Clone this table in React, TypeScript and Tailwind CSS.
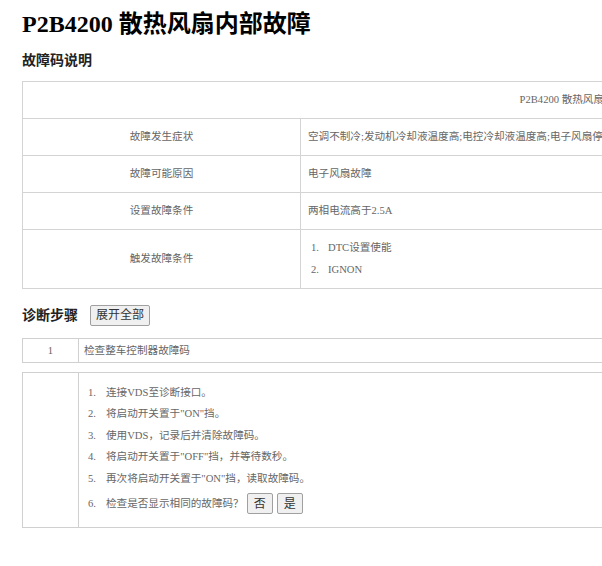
const FONT = "font-['Liberation_Serif','Noto_Sans_CJK_SC',serif]";

const infoRows: { label: string; value: string }[] = [
  { label: "故障发生症状", value: "空调不制冷;发动机冷却液温度高;电控冷却液温度高;电子风扇停止工作" },
  { label: "故障可能原因", value: "电子风扇故障" },
  { label: "设置故障条件", value: "两相电流高于2.5A" },
];

const triggers = ["DTC设置使能", "IGNON"];

const steps = [
  "连接VDS至诊断接口。",
  "将启动开关置于\"ON\"挡。",
  "使用VDS，记录后并清除故障码。",
  "将启动开关置于\"OFF\"挡，并等待数秒。",
  "再次将启动开关置于\"ON\"挡，读取故障码。",
];

function SmallButton({ children, className = "" }: { children: React.ReactNode; className?: string }) {
  return (
    <button
      className={`h-[21px] rounded-[2px] border border-[#a0a0a0] bg-[#f0f0f0] text-[12px] leading-none text-[#333] ${className}`}
    >
      {children}
    </button>
  );
}

export default function App() {
  return (
    <div className={`w-full h-screen overflow-hidden bg-white pl-[22px] pt-[8px] ${FONT}`}>
      <h1 className="text-[24px] leading-[32px] font-bold text-black whitespace-nowrap">
        P2B4200 散热风扇内部故障
      </h1>
      <h2 className="mt-[11px] text-[14px] leading-[20px] font-bold text-[#222]">故障码说明</h2>

      <table className="mt-[10px] w-[1122px] border-collapse text-[10.6px] text-[#666]">
        <tbody>
          <tr>
            <td colSpan={2} className="h-[37px] border border-[#d4d4d4] text-center">
              P2B4200 散热风扇内部故障
            </td>
          </tr>
          {infoRows.map((r) => (
            <tr key={r.label}>
              <td className="w-[278px] h-[37px] border border-[#d4d4d4] text-center">{r.label}</td>
              <td className="h-[37px] border border-[#d4d4d4] pl-[7px] whitespace-nowrap">{r.value}</td>
            </tr>
          ))}
          <tr>
            <td className="w-[278px] border border-[#d4d4d4] text-center">触发故障条件</td>
            <td className="border border-[#d4d4d4] pl-[10px] py-[7px]">
              {triggers.map((t, i) => (
                <div key={t} className="flex h-[22px] items-center">
                  <span className="w-[17px]">{i + 1}.</span>
                  <span>{t}</span>
                </div>
              ))}
            </td>
          </tr>
        </tbody>
      </table>

      <div className="mt-[15px] flex h-[22px] items-center gap-[12px]">
        <span className="text-[14px] font-bold text-[#222]">诊断步骤</span>
        <SmallButton className="w-[60px]">展开全部</SmallButton>
      </div>

      <div className="mt-[12px] flex h-[25px] w-[1122px] border border-[#d0d0d0] text-[10.6px] text-[#666]">
        <div className="flex w-[56px] items-center justify-center border-r border-[#d0d0d0]">1</div>
        <div className="flex items-center pl-[5px]">检查整车控制器故障码</div>
      </div>

      <div className="mt-[9px] flex w-[1122px] border border-[#d0d0d0] text-[10.6px] text-[#666]">
        <div className="w-[56px] border-r border-[#d0d0d0]" />
        <div className="py-[9px] pl-[9px]">
          {steps.map((s, i) => (
            <div key={s} className="flex h-[21.5px] items-center">
              <span className="w-[18px]">{i + 1}.</span>
              <span>{s}</span>
            </div>
          ))}
          <div className="flex h-[28px] items-center">
            <span className="w-[18px]">6.</span>
            <span>检查是否显示相同的故障码？</span>
            <SmallButton className="ml-[3px] w-[26px]">否</SmallButton>
            <SmallButton className="ml-[4px] w-[26px]">是</SmallButton>
          </div>
        </div>
      </div>
    </div>
  );
}
